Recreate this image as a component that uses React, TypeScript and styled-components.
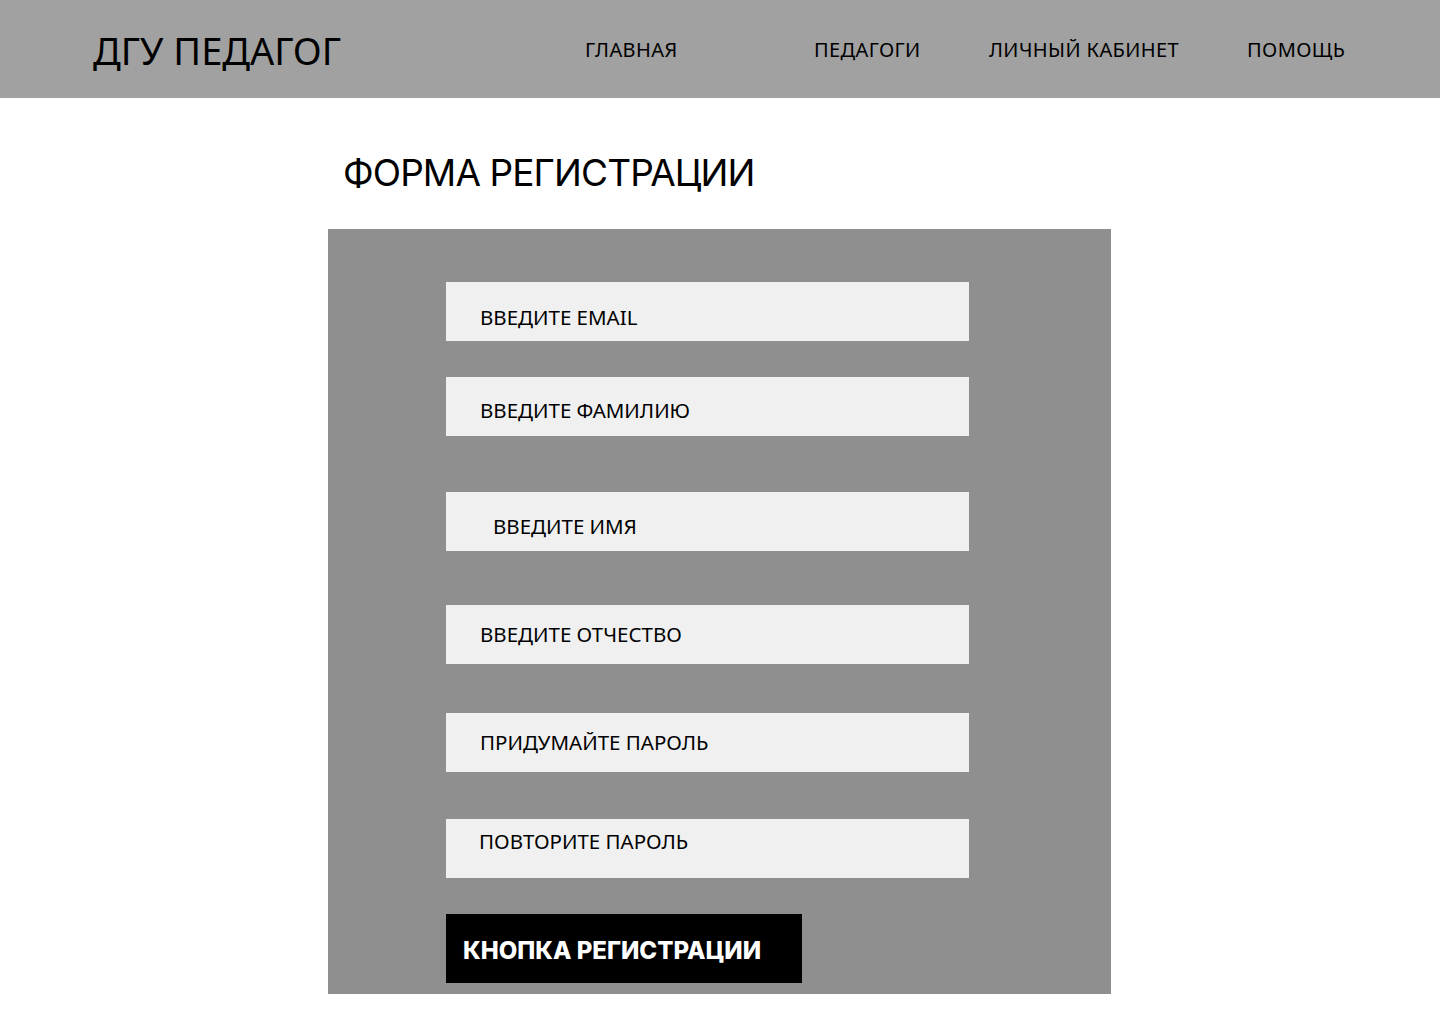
import React from "react";
import styled, { createGlobalStyle } from "styled-components";

const Global = createGlobalStyle`
  html, body { margin: 0; padding: 0; background: #ffffff; }
  body { font-family: "Noto Sans", "Open Sans", sans-serif; color: #000; }
  * { box-sizing: border-box; }
`;

const Header = styled.header`
  height: 98px;
  background: #a1a1a1;
  display: grid;
  grid-template-columns: 492px 229px 175px 258px auto;
  align-items: center;
  padding-left: 93px;
`;

const Logo = styled.div`
  font-family: "Noto Sans", sans-serif;
  font-size: 38px;
  line-height: 1;
  color: #000;
  margin-top: 2px;
`;

const NavItem = styled.a`
  font-family: "Noto Sans", sans-serif;
  font-size: 20px;
  color: #000;
  text-decoration: none;
  letter-spacing: 0.4px;
  white-space: nowrap;
`;

const Main = styled.main`
  padding-left: 328px;
  padding-top: 52px;
`;

const Title = styled.h1`
  font-family: "Inter", sans-serif;
  font-weight: 400;
  font-size: 37px;
  letter-spacing: -0.9px;
  line-height: 46px;
  margin: 0 0 0 15px;
`;

const Panel = styled.form`
  width: 783px;
  height: 765px;
  margin-top: 33px;
  background: #8f8f8f;
  padding: 53px 0 0 118px;
  display: flex;
  flex-direction: column;
  align-items: flex-start;
`;

const Field = styled.div<{ $mt: number; $pl: number; $pt: number }>`
  width: 523px;
  height: 59px;
  background: #f0f0f0;
  margin-top: ${(p) => p.$mt}px;
  padding-left: ${(p) => p.$pl}px;
  padding-top: ${(p) => p.$pt}px;
  font-family: "Noto Sans", sans-serif;
  font-size: 20.5px;
  line-height: 28px;
  color: #000;
`;

const Button = styled.button`
  margin-top: 36px;
  width: 356px;
  height: 69px;
  background: #000;
  color: #fff;
  border: none;
  padding: 3px 0 0 17px;
  text-align: left;
  font-family: "Inter", sans-serif;
  font-weight: 800;
  font-size: 24px;
  letter-spacing: 0;
  cursor: pointer;
`;

const fields = [
  { label: "ВВЕДИТЕ EMAIL", mt: 0, pl: 34, pt: 21 },
  { label: "ВВЕДИТЕ ФАМИЛИЮ", mt: 36, pl: 34, pt: 19 },
  { label: "ВВЕДИТЕ ИМЯ", mt: 56, pl: 47, pt: 20 },
  { label: "ВВЕДИТЕ ОТЧЕСТВО", mt: 54, pl: 34, pt: 15 },
  { label: "ПРИДУМАЙТЕ ПАРОЛЬ", mt: 49, pl: 34, pt: 15 },
  { label: "ПОВТОРИТЕ ПАРОЛЬ", mt: 47, pl: 33, pt: 8 },
];

const navItems = ["ГЛАВНАЯ", "ПЕДАГОГИ", "ЛИЧНЫЙ КАБИНЕТ", "ПОМОЩЬ"];

export default function App() {
  return (
    <>
      <Global />
      <Header>
        <Logo>ДГУ ПЕДАГОГ</Logo>
        {navItems.map((n) => (
          <NavItem key={n}>{n}</NavItem>
        ))}
      </Header>
      <Main>
        <Title>ФОРМА РЕГИСТРАЦИИ</Title>
        <Panel onSubmit={(e) => e.preventDefault()}>
          {fields.map((f) => (
            <Field key={f.label} $mt={f.mt} $pl={f.pl} $pt={f.pt}>
              {f.label}
            </Field>
          ))}
          <Button type="submit">КНОПКА РЕГИСТРАЦИИ</Button>
        </Panel>
      </Main>
    </>
  );
}
